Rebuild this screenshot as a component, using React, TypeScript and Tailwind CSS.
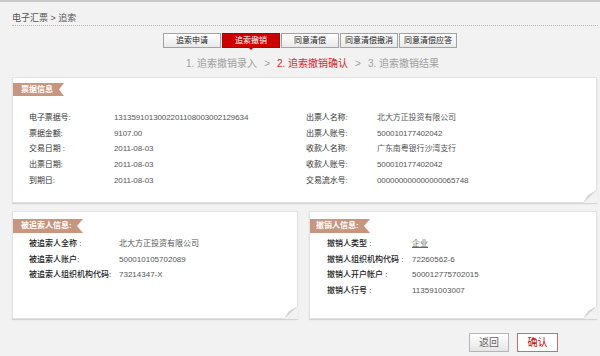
import React from 'react';

const tabs = ['追索申请', '追索撤销', '同意清偿', '同意清偿撤消', '同意清偿应答'];

const billLeft = [
  ['电子票据号:', '1313591013002201108003002129634'],
  ['票据金额:', '9107.00'],
  ['交易日期 :', '2011-08-03'],
  ['出票日期:', '2011-08-03'],
  ['到期日:', '2011-08-03'],
];

const billRight = [
  ['出票人名称:', '北大方正投资有限公司'],
  ['出票人账号:', '500010177402042'],
  ['收款人名称:', '广东南粤银行沙湾支行'],
  ['收款人账号:', '500010177402042'],
  ['交易流水号:', '000000000000000065748'],
];

const debtor = [
  ['被追索人全称 :', '北大方正投资有限公司'],
  ['被追索人账户:', '500010105702089'],
  ['被追索人组织机构代码:', '73214347-X'],
];

const revoker = [
  ['撤销人类型 :', '企业'],
  ['撤销人组织机构代码 :', '72260562-6'],
  ['撤销人开户帐户 :', '500012775702015'],
  ['撤销人行号 :', '113591003007'],
];

// folded page corner at the bottom right of each panel
function Curl({ id }: { id: string }) {
  return (
    <svg className="absolute right-[-1px] bottom-[-1px]" width="14" height="13" viewBox="0 0 14 13">
      <defs>
        <linearGradient id={id} x1="0" y1="0" x2="1" y2="1">
          <stop offset="0" stopColor="#f4f4f4" />
          <stop offset="1" stopColor="#a9a9a9" />
        </linearGradient>
      </defs>
      <polygon points="14,0 14,13 0,13" fill="#f2f2f2" />
      <polygon points="14,0 0,13 5,5" fill={`url(#${id})`} />
    </svg>
  );
}

export default function App() {
  return (
    <div className="w-[600px] h-[356px] overflow-hidden bg-[#f2f2f2] border-t-2 border-[#c9c9c9] font-['Liberation_Sans','Noto_Sans_CJK_SC',sans-serif]">
      {/* Breadcrumb */}
      <div className="ml-[12px] mr-[2px] pt-[10px] pb-px border-b border-dotted border-[#b5b5b5] text-[9px] leading-[12px] text-[#555]">
        电子汇票 &gt; 追索
      </div>

      {/* Tabs */}
      <div className="flex gap-px ml-[163px] mt-[7px]">
        {tabs.map((t, i) =>
          i === 1 ? (
            <div key={t} className="relative w-[58px] h-[15px] border border-[#b30000] bg-[#cc0000] text-white text-[8px] leading-[13px] text-center">
              {t}
              <span className="absolute left-1/2 -translate-x-1/2 top-full border-l-[3px] border-r-[3px] border-t-[3px] border-l-transparent border-r-transparent border-t-[#cc0000]" />
            </div>
          ) : (
            <div key={t} className="w-[58px] h-[15px] border border-[#a3a3a3] bg-[linear-gradient(#ffffff,#e9e9e9)] text-[#222] text-[8px] leading-[13px] text-center">
              {t}
            </div>
          )
        )}
      </div>

      {/* Steps */}
      <div className="flex gap-[7px] ml-[186px] mt-[10px] text-[10px] leading-[12px] text-[#a0a0a0]">
        <span>1. 追索撤销录入</span>
        <span>&gt;</span>
        <span className="text-[#d9262b]">2. 追索撤销确认</span>
        <span>&gt;</span>
        <span>3. 追索撤销结果</span>
      </div>

      {/* Bill info */}
      <div className="relative ml-[12px] mt-[7px] w-[585px] h-[126px] bg-white border border-[#e2e2e2] shadow-[0_1px_1px_rgba(0,0,0,0.12)]">
        <div className="mt-[5px] w-[51px] h-[13px] pl-[8px] bg-[#c8957e] text-white text-[8px] font-bold leading-[13px] [clip-path:polygon(0_0,100%_0,calc(100%_-_5px)_50%,100%_100%,0_100%)]">
          票据信息
        </div>
        <div className="grid grid-cols-[277px_1fr] mt-[14px] pl-[16px] text-[8px] tracking-[-0.1px]">
          <div>
            {billLeft.map(([k, v]) => (
              <div key={k} className="flex h-[15.75px] items-center">
                <span className="w-[85px] text-[#333]">{k}</span>
                <span className="text-[#555]">{v}</span>
              </div>
            ))}
          </div>
          <div>
            {billRight.map(([k, v]) => (
              <div key={k} className="flex h-[15.75px] items-center">
                <span className="w-[71px] text-[#333]">{k}</span>
                <span className="text-[#555]">{v}</span>
              </div>
            ))}
          </div>
        </div>
        <Curl id="c1" />
      </div>

      {/* Debtor / revoker */}
      <div className="flex gap-[11px] ml-[12px] mt-[8px]">
        <div className="relative w-[286px] h-[108px] bg-white border border-[#e2e2e2] shadow-[0_1px_1px_rgba(0,0,0,0.12)]">
          <div className="mt-[7px] w-[70px] h-[14px] pl-[8px] bg-[#c8957e] text-white text-[8px] font-bold leading-[14px] [clip-path:polygon(0_0,100%_0,calc(100%_-_6px)_50%,100%_100%,0_100%)]">
            被追索人信息:
          </div>
          <div className="mt-[3px] pl-[16px] text-[8px]">
            {debtor.map(([k, v]) => (
              <div key={k} className="flex h-[15.75px] items-center">
                <span className="w-[90px] text-[#222] font-medium">{k}</span>
                <span className="text-[#555]">{v}</span>
              </div>
            ))}
          </div>
          <Curl id="c2" />
        </div>
        <div className="relative w-[288px] h-[108px] bg-white border border-[#e2e2e2] shadow-[0_1px_1px_rgba(0,0,0,0.12)]">
          <div className="mt-[7px] w-[60px] h-[14px] pl-[6px] bg-[#c8957e] text-white text-[8px] font-bold leading-[14px] [clip-path:polygon(0_0,100%_0,calc(100%_-_6px)_50%,100%_100%,0_100%)]">
            撤销人信息:
          </div>
          <div className="mt-[3px] pl-[17px] text-[8px]">
            {revoker.map(([k, v], i) => (
              <div key={k} className="flex h-[15.75px] items-center">
                <span className="w-[85px] text-[#222] font-medium">{k}</span>
                <span className={i === 0 ? 'text-[#666] underline' : 'text-[#555]'}>{v}</span>
              </div>
            ))}
          </div>
          <Curl id="c3" />
        </div>
      </div>

      {/* Buttons */}
      <div className="flex gap-[8px] ml-[469px] mt-[14px]">
        <button className="w-[40px] h-[19px] border border-[#b5b5b5] bg-[linear-gradient(#ffffff,#e6e6e6)] text-[10px] text-[#666]">
          返回
        </button>
        <button className="w-[41px] h-[19px] border border-[#d46a6a] bg-white text-[10px] text-[#cc0000]">
          确认
        </button>
      </div>
    </div>
  );
}
